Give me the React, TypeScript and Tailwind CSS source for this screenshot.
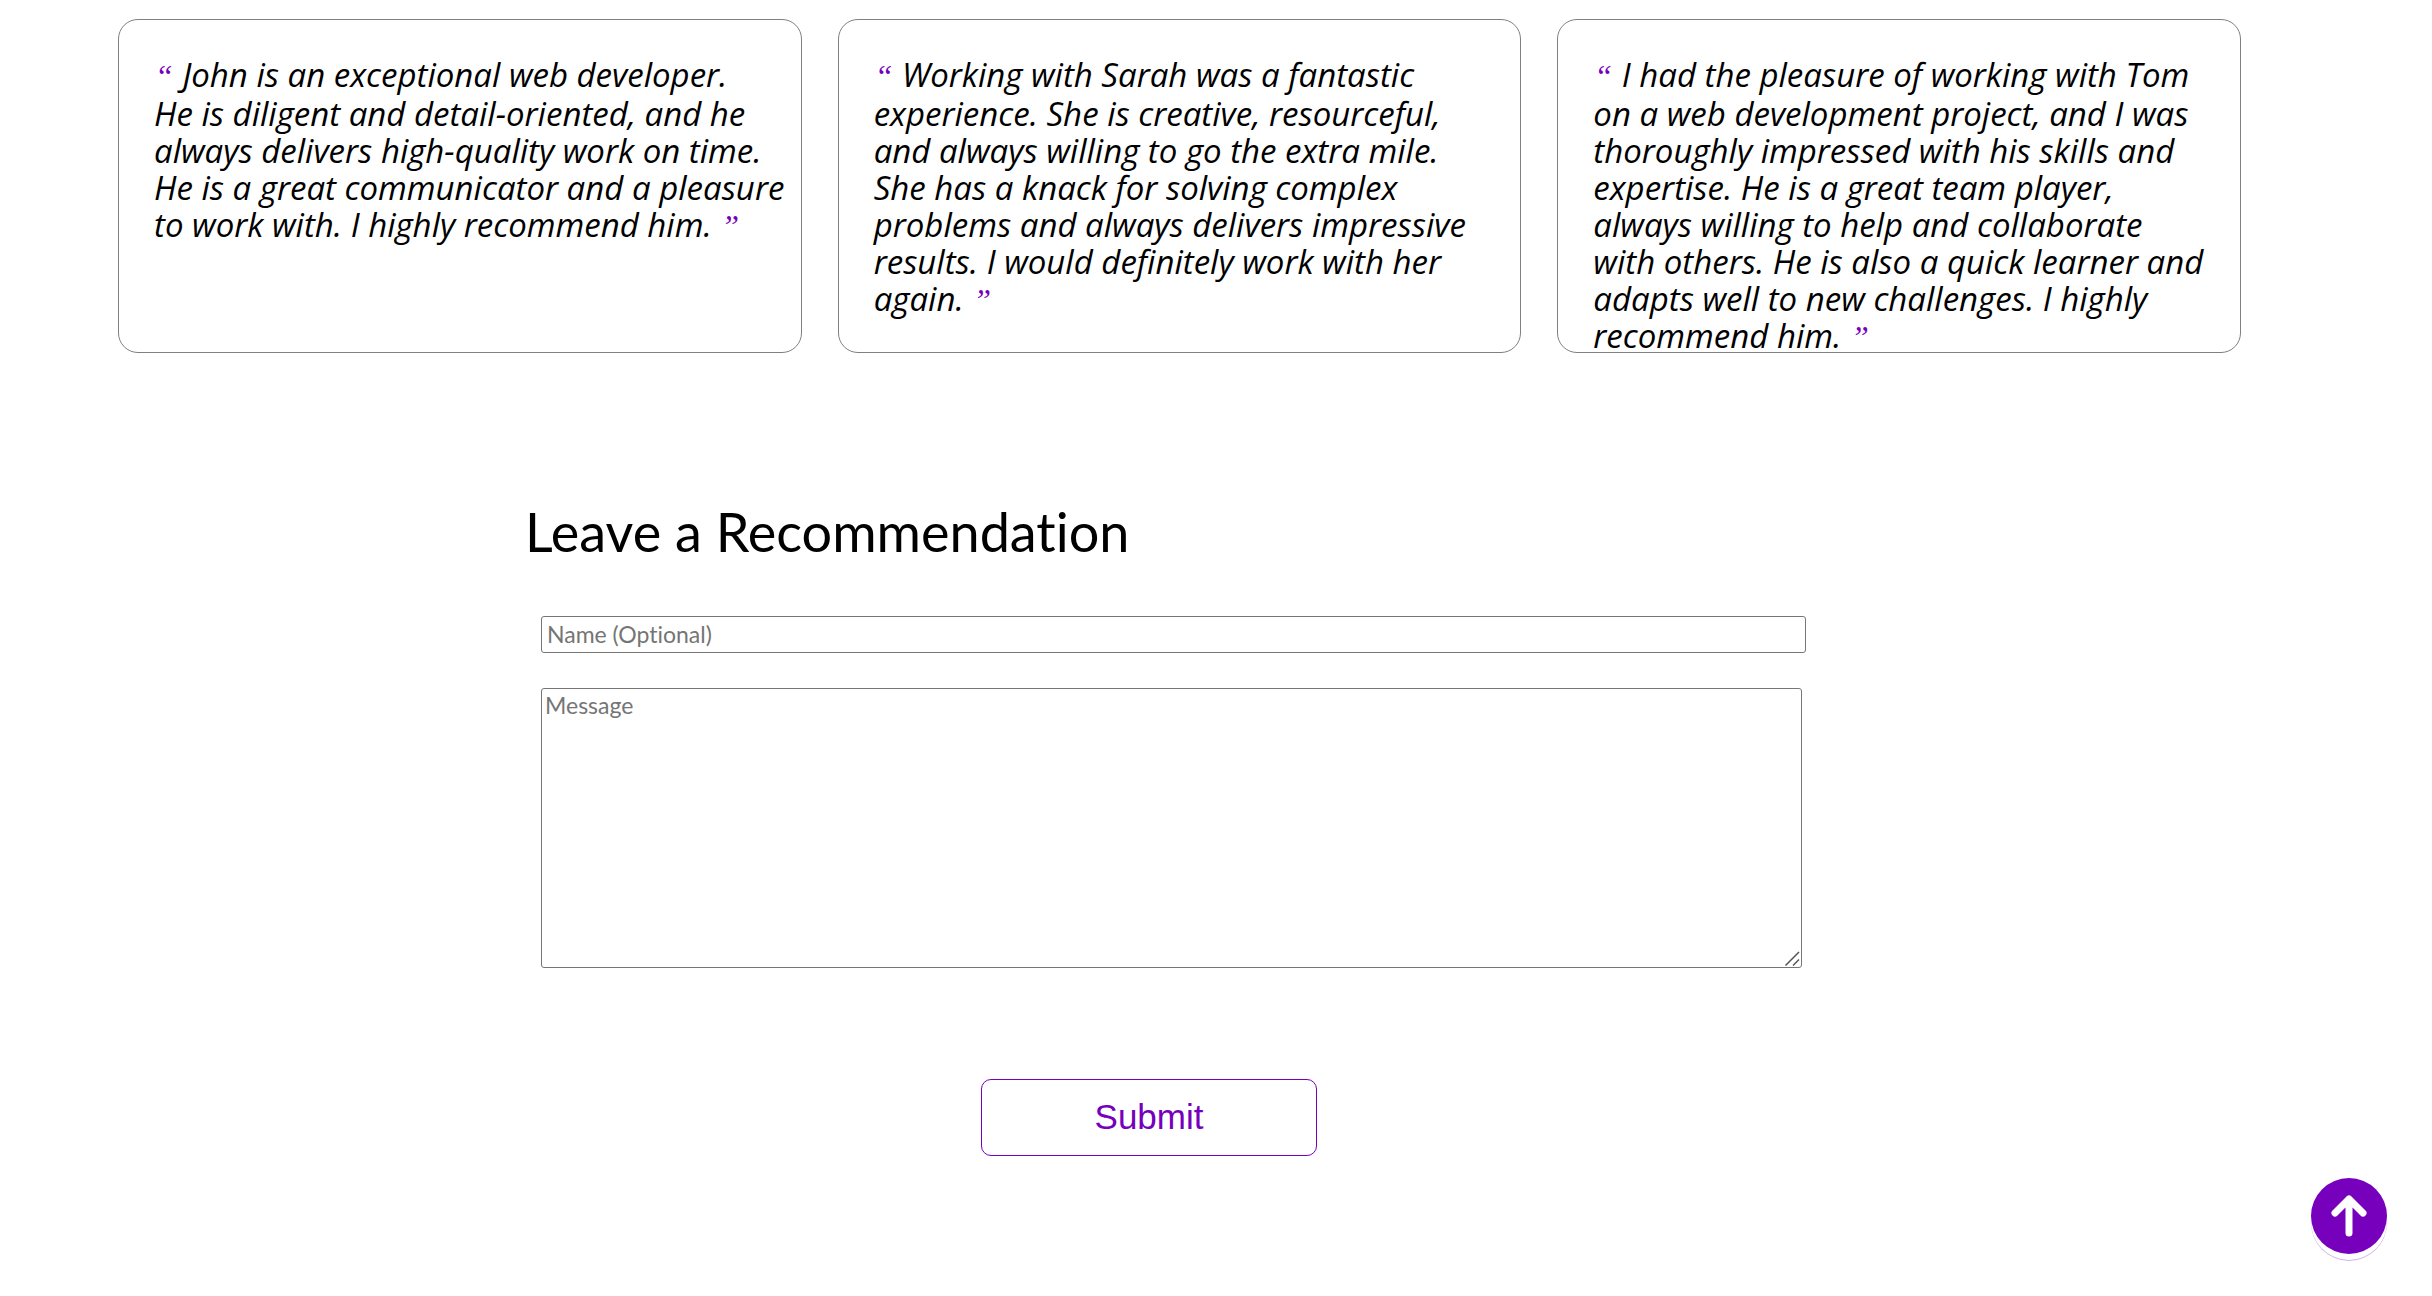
import { Fragment } from "react";

const recommendations = [
  [
    "John is an exceptional web developer.",
    "He is diligent and detail-oriented, and he",
    "always delivers high-quality work on time.",
    "He is a great communicator and a pleasure",
    "to work with. I highly recommend him.",
  ],
  [
    "Working with Sarah was a fantastic",
    "experience. She is creative, resourceful,",
    "and always willing to go the extra mile.",
    "She has a knack for solving complex",
    "problems and always delivers impressive",
    "results. I would definitely work with her",
    "again.",
  ],
  [
    "I had the pleasure of working with Tom",
    "on a web development project, and I was",
    "thoroughly impressed with his skills and",
    "expertise. He is a great team player,",
    "always willing to help and collaborate",
    "with others. He is also a quick learner and",
    "adapts well to new challenges. I highly",
    "recommend him.",
  ],
];

function Quote({ children }: { children: string }) {
  return (
    <span className="inline-block px-px align-baseline font-['Liberation_Serif',serif] text-[32px] leading-[38px] text-[#7600bc]">
      {children}
    </span>
  );
}

function Card({ lines }: { lines: string[] }) {
  return (
    <article className="h-[334px] rounded-[20px] border border-[#808080] pt-9 pl-[35px]">
      <p className="font-['Open_Sans',sans-serif] text-[33px] leading-[37px] whitespace-nowrap text-black italic">
        <Quote>“</Quote>{" "}
        {lines.map((line, i) => (
          <Fragment key={line}>
            {i > 0 && <br />}
            {line}
          </Fragment>
        ))}{" "}
        <Quote>”</Quote>
      </p>
    </article>
  );
}

export default function App() {
  return (
    <main className="min-h-screen bg-white font-[Lato,sans-serif]">
      <section className="grid grid-cols-3 gap-9 pt-[19px] pr-[191px] pl-[118px]">
        {recommendations.map((lines) => (
          <Card key={lines[0]} lines={lines} />
        ))}
      </section>

      <section className="pt-[147px] pl-[525px]">
        <h2 className="text-[54px] leading-[64px] text-black [font-variant-ligatures:none]">
          Leave a Recommendation
        </h2>
        <form className="flex flex-col pt-[52px] pl-4 text-[23px] leading-[29px]">
          <input
            type="text"
            aria-label="Name (Optional)"
            placeholder="Name (Optional)"
            className="h-[37px] w-[1265px] max-w-full rounded-[3px] border border-[#767676] px-[5px] pb-0.5 placeholder:text-[#757575] [font-variant-ligatures:none]"
          />
          <div className="relative mt-[35px] w-[1261px] max-w-full">
            <textarea
              aria-label="Message"
              placeholder="Message"
              className="block h-[280px] w-full resize-none rounded-[3px] border border-[#767676] px-[3px] py-[2px] placeholder:text-[#757575]"
            />
            <svg
              viewBox="0 0 18 18"
              className="pointer-events-none absolute right-0 bottom-0 size-[18px]"
              stroke="#555"
              strokeWidth="1.5"
              aria-hidden="true"
            >
              <path d="M1.500 15.500L15 2M9 15.500L15 9.500" />
            </svg>
          </div>
          <button
            type="submit"
            className="mt-[111px] ml-[440px] h-[77px] w-[336px] rounded-[10px] border border-[#7600bc] pb-0.5 font-['Liberation_Sans',sans-serif] text-[35px] leading-10 text-[#7600bc]"
          >
            Submit
          </button>
        </form>
      </section>

      <button
        type="button"
        aria-label="Back to top"
        className="fixed right-[45px] bottom-[42px] flex size-[76px] items-center justify-center rounded-full bg-[#7600bc] shadow-[0_6px_0_0_#fff,0_7px_0_0_#d3b0ec]"
      >
        <svg
          viewBox="0 0 76 76"
          className="size-full"
          fill="none"
          stroke="#fff"
          strokeWidth="7"
          strokeLinecap="round"
          strokeLinejoin="round"
        >
          <path d="M38 55V21M24 35L38 21L52 35" />
        </svg>
      </button>
    </main>
  );
}
